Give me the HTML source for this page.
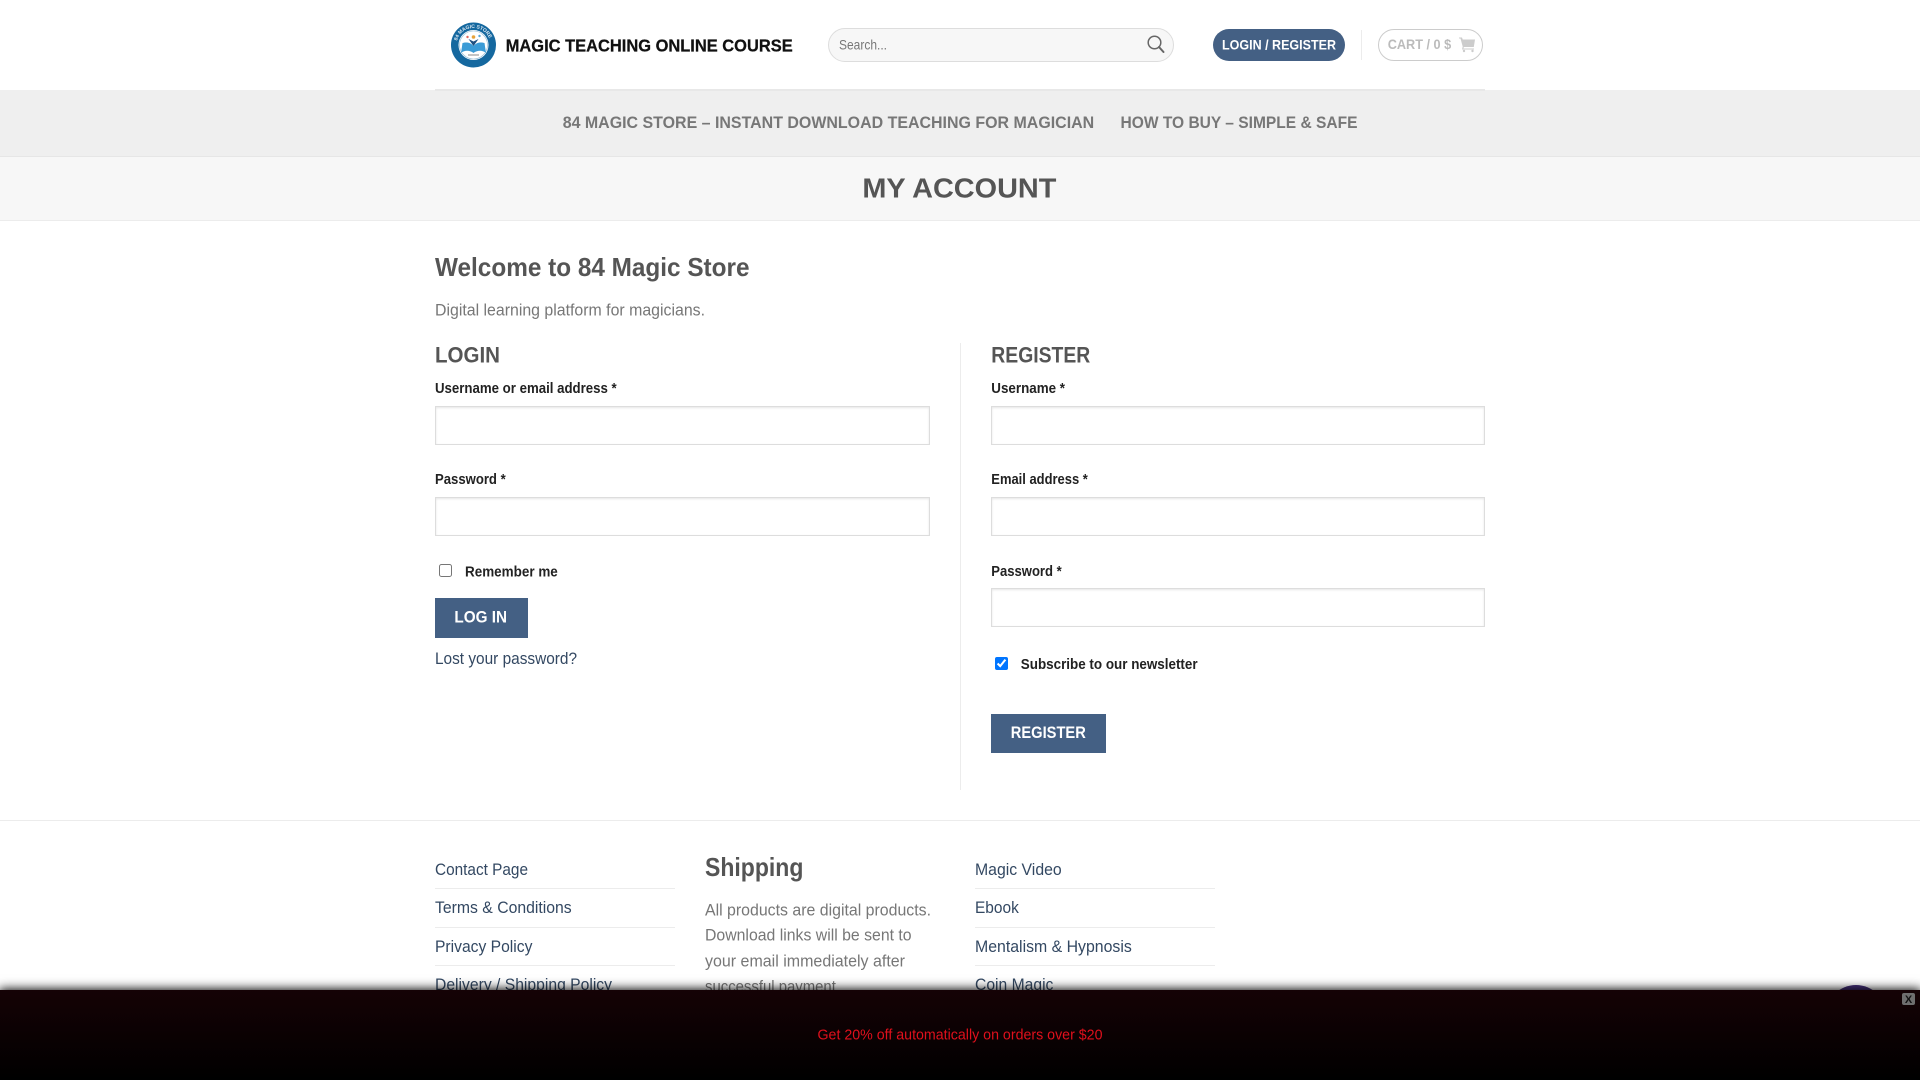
<!DOCTYPE html>
<html lang="en"><head><meta charset="utf-8"><title>My Account – 84 Magic Store</title>
<style>
html,body{margin:0;padding:0;width:1920px;height:1080px;overflow:hidden;background:#fff;font-family:"Liberation Sans",sans-serif}
.a{position:absolute;box-sizing:border-box}
input.f{position:absolute;box-sizing:border-box;height:39px;border:1px solid #ddd;background:#fff;box-shadow:inset 0 1px 2px rgba(0,0,0,.1);margin:0;padding:0}
input.c{position:absolute;width:13px;height:13px;margin:0}
svg.o{position:absolute;left:0;top:0;pointer-events:none}
text{font-family:"Liberation Sans",sans-serif}
.lb{font-size:15px;font-weight:bold;fill:#222}
.ln{font-size:16.500px;fill:#334862}
.p{font-size:16.500px;fill:#777}
.h{font-size:22.500px;font-weight:bold;fill:#555}
.nv{font-size:16.500px;font-weight:bold;fill:#777}
.bt{font-size:16.500px;font-weight:bold;fill:#fff}
</style></head><body>
<div class="a" style="left:0;top:90px;width:1920px;height:67px;background:#efefef;border-bottom:1px solid #e6e6e6"></div>
<div class="a" style="left:435px;top:89px;width:1050px;height:2px;background:#e8e8e8"></div>
<div class="a" style="left:0;top:157px;width:1920px;height:64px;background:#f7f7f7;border-bottom:1px solid #ececec"></div>
<div class="a" style="left:828px;top:28px;width:346px;height:34px;background:#f7f7f7;border:1px solid #ddd;border-radius:17px"></div>
<div class="a" style="left:1213px;top:29px;width:132px;height:32px;background:#446084;border-radius:16px"></div>
<div class="a" style="left:1361px;top:30px;width:1px;height:30px;background:#ececec"></div>
<div class="a" style="left:1378px;top:29px;width:105px;height:32px;border:1px solid #ccc;border-radius:16px"></div>
<input class="f" style="left:435px;top:406px;width:495px">
<input class="f" style="left:435px;top:497px;width:495px">
<input class="f" style="left:991px;top:406px;width:494px">
<input class="f" style="left:991px;top:497px;width:494px">
<input class="f" style="left:991px;top:588px;width:494px">
<input class="c" type="checkbox" style="left:439px;top:564px">
<input class="c" type="checkbox" checked style="left:995px;top:657px">
<div class="a" style="left:435px;top:598px;width:93px;height:40px;background:#446084"></div>
<div class="a" style="left:991px;top:714px;width:115px;height:39px;background:#446084"></div>
<div class="a" style="left:960px;top:343px;width:1px;height:447px;background:#ececec"></div>
<div class="a" style="left:0;top:820px;width:1920px;height:1px;background:#ececec"></div>
<div class="a" style="left:435px;top:888px;width:240px;height:1px;background:#ececec"></div>
<div class="a" style="left:435px;top:927px;width:240px;height:1px;background:#ececec"></div>
<div class="a" style="left:435px;top:965px;width:240px;height:1px;background:#ececec"></div>
<div class="a" style="left:975px;top:888px;width:240px;height:1px;background:#ececec"></div>
<div class="a" style="left:975px;top:927px;width:240px;height:1px;background:#ececec"></div>
<div class="a" style="left:975px;top:965px;width:240px;height:1px;background:#ececec"></div>
<svg class="o" width="1920" height="1080" viewBox="0 0 1920 1080" xmlns="http://www.w3.org/2000/svg">
<!-- logo -->
<circle cx="473.500" cy="45" r="22.500" fill="#15689f"/>
<circle cx="473.500" cy="45" r="15" fill="#fff"/>
<circle cx="473.500" cy="45" r="14" fill="none" stroke="#8fb9d6" stroke-width=".6"/>
<defs><path id="arc" d="M456.500 45a17 17 0 0 1 34 0"/></defs>
<text font-size="5" font-weight="bold" fill="#dfeaf3"><textPath href="#arc" startOffset="8%">84 MAGIC STORE</textPath></text>
<path d="M461 53c3-3 9-3 12.500 0 3.500-3 9.500-3 12.500 0l-1.500-10c-3-1-8-1-11 3-3-4-8-4-11-3z" fill="#3b9bd6"/>
<path d="M473.500 46l-5-7 5 2.500 5-2.500z" fill="#1e4f80"/>
<circle cx="473.500" cy="37" r="1.800" fill="#e8a33a"/>
<circle cx="479.500" cy="36" r="1.200" fill="#5aa7d8"/>
<circle cx="467.500" cy="37" r="1.200" fill="#e2675a"/>
<path d="M468 55h11" stroke="#888" stroke-width="1"/>
<text x="505.700" y="51.500" font-size="17.500" font-weight="bold" fill="#111" stroke="#111" stroke-width=".25" textLength="287" lengthAdjust="spacingAndGlyphs">MAGIC TEACHING ONLINE COURSE</text>
<!-- search -->
<text x="839" y="49.500" font-size="14" fill="#777" textLength="48" lengthAdjust="spacingAndGlyphs">Search...</text>
<circle cx="1154.500" cy="42.500" r="6.300" fill="none" stroke="#666" stroke-width="1.500"/>
<path d="M1159 47l4.500 5" stroke="#666" stroke-width="2" stroke-linecap="round"/>
<text x="1222" y="49.500" font-size="14" font-weight="bold" fill="#fff" textLength="114" lengthAdjust="spacingAndGlyphs">LOGIN / REGISTER</text>
<text x="1387.700" y="49" font-size="14" font-weight="bold" fill="#bbb" textLength="63.500" lengthAdjust="spacingAndGlyphs">CART / 0 $</text>
<path d="M1459 37.500h3l.7 2h12.300l-1.200 7.500h-10l-.4 1.500h10.600v1h-12l.7-3-2.200-8h-1.500z" fill="#ccc"/>
<circle cx="1464" cy="51" r="1.200" fill="#ccc"/><circle cx="1472.500" cy="51" r="1.200" fill="#ccc"/>
<!-- nav -->
<text x="562.700" y="128" class="nv" textLength="531.500" lengthAdjust="spacingAndGlyphs">84 MAGIC STORE – INSTANT DOWNLOAD TEACHING FOR MAGICIAN</text>
<text x="1120.500" y="128" class="nv" textLength="237" lengthAdjust="spacingAndGlyphs">HOW TO BUY – SIMPLE &amp; SAFE</text>
<text x="862.400" y="197.300" font-size="27.500" font-weight="bold" fill="#555" textLength="194" lengthAdjust="spacingAndGlyphs">MY ACCOUNT</text>
<!-- main -->
<text x="435" y="276" font-size="26" font-weight="bold" fill="#555" textLength="314.500" lengthAdjust="spacingAndGlyphs">Welcome to 84 Magic Store</text>
<text x="435" y="315.500" class="p" textLength="270" lengthAdjust="spacingAndGlyphs">Digital learning platform for magicians.</text>
<text x="435" y="362.300" class="h" textLength="65" lengthAdjust="spacingAndGlyphs">LOGIN</text>
<text x="991.300" y="362.300" class="h" textLength="99" lengthAdjust="spacingAndGlyphs">REGISTER</text>
<text x="435" y="393" class="lb" textLength="181.700" lengthAdjust="spacingAndGlyphs">Username or email address *</text>
<text x="435" y="484" class="lb" textLength="70.700" lengthAdjust="spacingAndGlyphs">Password *</text>
<text x="465" y="576.300" class="lb" textLength="92.800" lengthAdjust="spacingAndGlyphs">Remember me</text>
<text x="454.400" y="622.300" class="bt" textLength="52.600" lengthAdjust="spacingAndGlyphs">LOG IN</text>
<text x="435" y="664" class="ln" textLength="142" lengthAdjust="spacingAndGlyphs">Lost your password?</text>
<text x="991.300" y="393" class="lb" textLength="73.700" lengthAdjust="spacingAndGlyphs">Username *</text>
<text x="991.300" y="484" class="lb" textLength="96.500" lengthAdjust="spacingAndGlyphs">Email address *</text>
<text x="991.300" y="576" class="lb" textLength="70.400" lengthAdjust="spacingAndGlyphs">Password *</text>
<text x="1020.800" y="669" class="lb" textLength="176.800" lengthAdjust="spacingAndGlyphs">Subscribe to our newsletter</text>
<text x="1010.800" y="738" class="bt" textLength="75" lengthAdjust="spacingAndGlyphs">REGISTER</text>
<!-- footer -->
<text x="435" y="875" class="ln" textLength="93" lengthAdjust="spacingAndGlyphs">Contact Page</text>
<text x="435" y="913" class="ln" textLength="136.700" lengthAdjust="spacingAndGlyphs">Terms &amp; Conditions</text>
<text x="435" y="952" class="ln" textLength="97.400" lengthAdjust="spacingAndGlyphs">Privacy Policy</text>
<text x="435" y="990" class="ln" textLength="177" lengthAdjust="spacingAndGlyphs">Delivery / Shipping Policy</text>
<text x="705" y="876" font-size="26" font-weight="bold" fill="#555" textLength="98.400" lengthAdjust="spacingAndGlyphs">Shipping</text>
<text x="705" y="915.500" class="p" textLength="226" lengthAdjust="spacingAndGlyphs">All products are digital products.</text>
<text x="705" y="940.500" class="p" textLength="206.600" lengthAdjust="spacingAndGlyphs">Download links will be sent to</text>
<text x="705" y="966.500" class="p" textLength="200" lengthAdjust="spacingAndGlyphs">your email immediately after</text>
<text x="705" y="992" class="p" textLength="135" lengthAdjust="spacingAndGlyphs">successful payment.</text>
<text x="975" y="875" class="ln" textLength="86.700" lengthAdjust="spacingAndGlyphs">Magic Video</text>
<text x="975" y="913" class="ln" textLength="43.800" lengthAdjust="spacingAndGlyphs">Ebook</text>
<text x="975" y="952" class="ln" textLength="156.800" lengthAdjust="spacingAndGlyphs">Mentalism &amp; Hypnosis</text>
<text x="975" y="990" class="ln" textLength="78.400" lengthAdjust="spacingAndGlyphs">Coin Magic</text>
<circle cx="1856" cy="1015" r="30" fill="#45307a"/>
</svg>
<!-- promo bar -->
<div class="a" style="left:0;top:990px;width:1920px;height:90px;background:linear-gradient(#150205,#000);box-shadow:0 0 10px 1px #000"></div>
<svg class="o" width="1920" height="1080" viewBox="0 0 1920 1080" xmlns="http://www.w3.org/2000/svg">
<text x="817.500" y="1039.500" font-size="15" fill="#e0101c" textLength="285" lengthAdjust="spacingAndGlyphs">Get 20% off automatically on orders over $20</text>
<rect x="1902" y="993" width="13" height="12" rx="2" fill="#6e6e6e"/>
<text x="1908.500" y="1003" font-size="11" font-weight="bold" fill="#111" text-anchor="middle">X</text>
</svg>
</body></html>
